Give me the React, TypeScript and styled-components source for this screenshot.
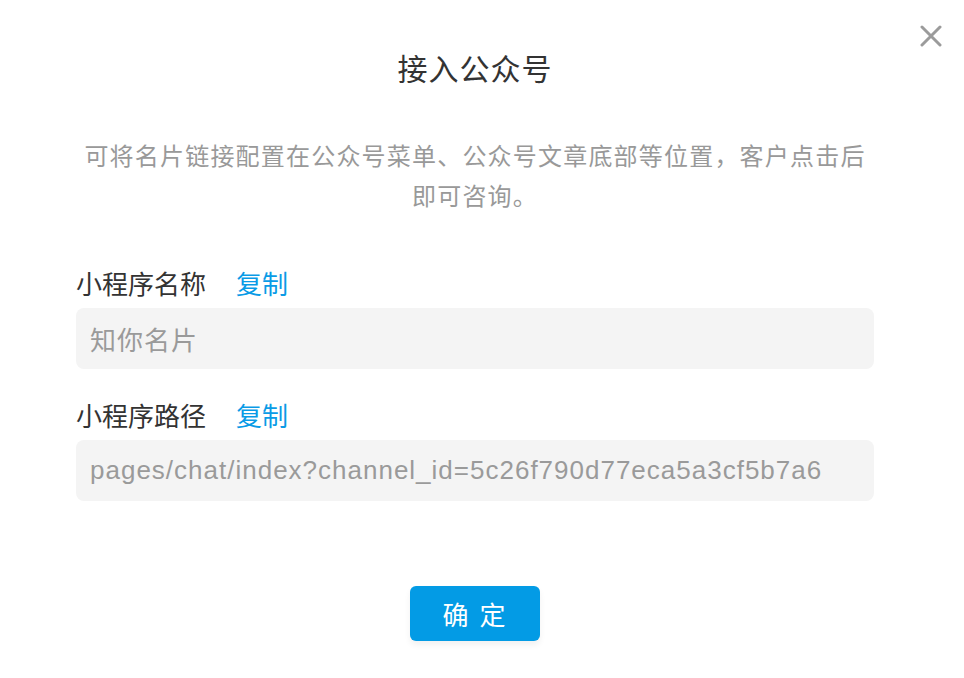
import styled, { createGlobalStyle } from "styled-components";

const GlobalStyle = createGlobalStyle`
  html, body {
    margin: 0;
    padding: 0;
    background: #ffffff;
  }
  body {
    font-family: "Liberation Sans", "Noto Sans CJK SC", sans-serif;
  }
`;

const fields = [
  { label: "小程序名称", value: "知你名片" },
  { label: "小程序路径", value: "pages/chat/index?channel_id=5c26f790d77eca5a3cf5b7a6" },
];

const CloseIcon = () => (
  <svg width="22" height="22" viewBox="0 0 22 22">
    <path d="M2 2 L20 20 M20 2 L2 20" stroke="#9b9b9b" strokeWidth="3" strokeLinecap="round" />
  </svg>
);

const App = () => {
  return (
    <S.Page>
      <GlobalStyle />
      <S.Close aria-label="关闭">
        <CloseIcon />
      </S.Close>
      <S.Title>接入公众号</S.Title>
      <S.Desc>
        可将名片链接配置在公众号菜单、公众号文章底部等位置，客户点击后
        <br />
        即可咨询。
      </S.Desc>
      <S.Form>
        {fields.map((f) => (
          <S.Group key={f.label}>
            <S.LabelRow>
              <S.Label>{f.label}</S.Label>
              <S.Copy>复制</S.Copy>
            </S.LabelRow>
            <S.Field>{f.value}</S.Field>
          </S.Group>
        ))}
      </S.Form>
      <S.Confirm>确 定</S.Confirm>
    </S.Page>
  );
};

const S = {
  Page: styled.div`
    position: relative;
    width: 964px;
    height: 678px;
    box-sizing: border-box;
    padding: 48px 90px 0 76px;
    display: flex;
    flex-direction: column;
    align-items: stretch;
    font-family: "Liberation Sans", "Noto Sans CJK SC", sans-serif;
  `,
  Close: styled.div`
    position: absolute;
    top: 25px;
    right: 22px;
    width: 22px;
    height: 22px;
    cursor: pointer;
  `,
  Title: styled.h1`
    margin: 0;
    text-align: center;
    font-size: 30px;
    line-height: 44px;
    font-weight: 400;
    color: #333333;
    letter-spacing: 1px;
  `,
  Desc: styled.p`
    margin: 45px 0 0;
    text-align: center;
    font-size: 24px;
    line-height: 40px;
    color: #999999;
    letter-spacing: 1.2px;
  `,
  Form: styled.div`
    margin-top: 50px;
    display: flex;
    flex-direction: column;
    gap: 30px;
  `,
  Group: styled.div`
    display: flex;
    flex-direction: column;
    gap: 5px;
  `,
  LabelRow: styled.div`
    display: flex;
    align-items: center;
    gap: 30px;
    line-height: 36px;
    font-size: 26px;
  `,
  Label: styled.span`
    color: #333333;
  `,
  Copy: styled.span`
    color: #0a9be6;
    cursor: pointer;
  `,
  Field: styled.div`
    height: 61px;
    box-sizing: border-box;
    padding: 0 14px;
    display: flex;
    align-items: center;
    background: #f4f4f4;
    border-radius: 8px;
    font-size: 26px;
    letter-spacing: 1px;
    color: #9a9a9a;
  `,
  Confirm: styled.button`
    align-self: center;
    margin-top: 85px;
    width: 130px;
    height: 55px;
    border: none;
    border-radius: 6px;
    background: #039be5;
    color: #ffffff;
    font-family: "Liberation Sans", "Noto Sans CJK SC", sans-serif;
    font-size: 26px;
    letter-spacing: 2px;
    box-shadow: 0 4px 6px rgba(0, 0, 0, 0.06);
    cursor: pointer;
  `,
};

export default App;
